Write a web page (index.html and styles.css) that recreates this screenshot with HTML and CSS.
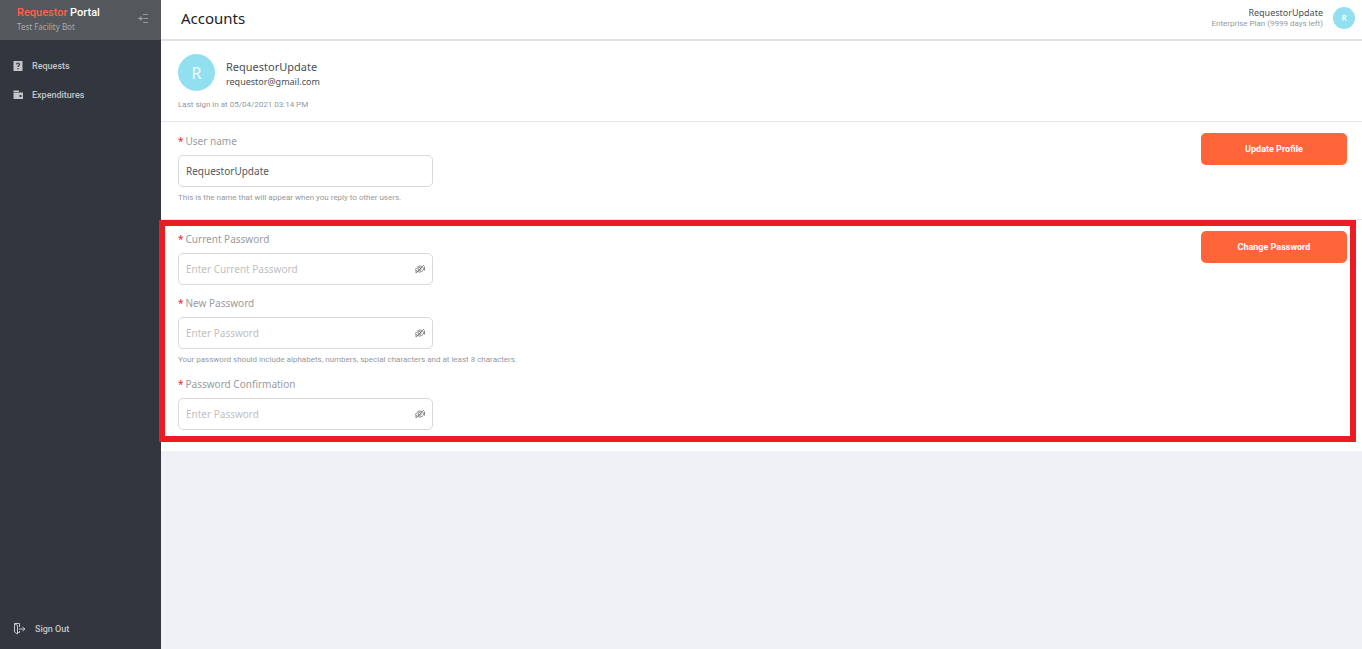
FILE: index.html
```html
<!DOCTYPE html>
<html lang="en">
  <head>
    <meta charset="UTF-8">
    <title>Accounts</title>
    <link rel="stylesheet" href="styles.css">
  </head>
<body>
  <svg class="sprite" aria-hidden="true">
    <symbol id="eye-off" viewBox="0 0 20 20">
      <path d="M1 11C4 6 7 4 10 4s6 2 8 6c-2 4-5 6-8 6s-6-1-9-5z" fill="none" stroke="currentColor" stroke-width="1.8"/>
      <circle cx="9" cy="10" r="3" fill="none" stroke="currentColor" stroke-width="1.8"/>
      <path d="M2 18L18 2M19 5v8M2 12v6" fill="none" stroke="currentColor" stroke-width="1.8"/>
    </symbol>
  </svg>

  <aside class="sidebar">
    <div class="brand">
      <div>
        <div class="brand-name"><span class="accent">Requestor</span> Portal</div>
        <div class="brand-sub">Test Facility Bot</div>
      </div>
      <button class="collapse" type="button" aria-label="Collapse menu">
        <svg width="11" height="11" viewBox="0 0 11 11" fill="none" stroke="currentColor">
          <path d="M5 1.5h5M6 5.5h4M5 9.5h5M0.5 5.5h5"/>
          <path d="M3.5 3L0 5.5L3.5 8z" fill="currentColor" stroke="none"/>
        </svg>
      </button>
    </div>
    <nav class="menu">
      <a class="menu-link" href="#">
        <svg width="10" height="10" viewBox="0 0 10 10">
          <rect x="0.5" width="9" height="10" fill="currentColor"/>
          <path d="M3.5 3.5C3.5 1.5 6.5 1.5 6.5 3.5C6.5 4.5 5 4.5 5 6M5 7v1.2" fill="none" stroke="#32363e" stroke-width="1.2"/>
        </svg>
        Requests
      </a>
      <a class="menu-link" href="#">
        <svg width="10" height="10" viewBox="0 0 10 10">
          <path d="M0.5 0.5H6V2H0.5zM0.5 2.5H10V9H0.5z" fill="currentColor"/>
          <rect x="6.5" y="5" width="2" height="2" fill="#32363e"/>
        </svg>
        Expenditures
      </a>
    </nav>
    <a class="sign-out" href="#">
      <svg width="13" height="12" viewBox="0 0 13 12" fill="none" stroke="currentColor">
        <path d="M1.5 0.5L4.5 2.5V11L1.5 9zM1.5 0.5H6.5V4M4.5 9.5H6.5V8M6 6H12M9.5 4L12 6L9.5 8"/>
      </svg>
      Sign Out
    </a>
  </aside>

  <main class="main">
    <header class="topbar">
      <h1 class="title">Accounts</h1>
      <div class="user">
        <div>
          <div class="user-name">RequestorUpdate</div>
          <div class="user-plan">Enterprise Plan (9999 days left)</div>
        </div>
        <div class="avatar avatar-small">R</div>
      </div>
    </header>

    <section class="profile">
      <div class="profile-row">
        <div class="avatar">R</div>
        <div class="profile-text">
          <div class="profile-name">RequestorUpdate</div>
          <div class="profile-mail">requestor@gmail.com</div>
        </div>
      </div>
      <div class="last-seen">Last sign in at 05/04/2021 03:14 PM</div>
    </section>

    <form class="panel">
      <div class="fields">
        <div class="field">
          <label class="label" for="username">User name</label>
          <div class="control">
            <input class="input" id="username" type="text" value="RequestorUpdate">
          </div>
          <p class="hint">This is the name that will appear when you reply to other users.</p>
        </div>
      </div>
      <button class="button" type="submit">Update Profile</button>
    </form>

    <form class="panel panel-password">
      <div class="fields">
        <div class="field">
          <label class="label" for="current">Current Password</label>
          <div class="control">
            <input class="input" id="current" type="password" placeholder="Enter Current Password">
            <button class="toggle" type="button" aria-label="Show password"><svg class="eye"><use href="#eye-off"/></svg></button>
          </div>
        </div>
        <div class="field">
          <label class="label" for="new">New Password</label>
          <div class="control">
            <input class="input" id="new" type="password" placeholder="Enter Password">
            <button class="toggle" type="button" aria-label="Show password"><svg class="eye"><use href="#eye-off"/></svg></button>
          </div>
          <p class="hint">Your password should include alphabets, numbers, special characters and at least 8 characters.</p>
        </div>
        <div class="field">
          <label class="label" for="confirm">Password Confirmation</label>
          <div class="control">
            <input class="input" id="confirm" type="password" placeholder="Enter Password">
            <button class="toggle" type="button" aria-label="Show password"><svg class="eye"><use href="#eye-off"/></svg></button>
          </div>
        </div>
      </div>
      <button class="button" type="submit">Change Password</button>
    </form>
  </main>
</body>
</html>
```

FILE: styles.css
```css
* {
  box-sizing: border-box;
}

body {
  margin: 0;
  min-height: 100vh;
  display: flex;
  background: #f0f1f5;
  color: #4b4f54;
  font-family: "Noto Sans", sans-serif;
  font-size: 10px;
}

button, input {
  font-family: inherit;
}

.sprite {
  display: none;
}

/* sidebar */
.sidebar {
  flex: 0 0 161px;
  display: flex;
  flex-direction: column;
  background: #32363e;
  color: #c3c5c8;
}

.brand {
  height: 40px;
  padding: 6px 12px 0 17px;
  display: flex;
  justify-content: space-between;
  background: #54575b;
}

.brand-name {
  color: #fff;
  font-family: Roboto, sans-serif;
  font-size: 11px;
  font-weight: 500;
  line-height: 14px;
}

.accent {
  color: #ff6347;
}

.brand-sub {
  color: #a9abad;
  font-size: 8px;
  line-height: 13px;
}

.collapse {
  height: 24px;
  padding: 0;
  display: flex;
  align-items: center;
  border: 0;
  background: none;
  color: #96989b;
}

.menu {
  flex: 1;
  padding-top: 11px;
}

.menu-link, .sign-out {
  display: flex;
  align-items: center;
  gap: 9px;
  height: 29px;
  padding-left: 13px;
  color: inherit;
  font-family: Roboto, sans-serif;
  font-size: 9px;
  font-weight: 500;
  text-decoration: none;
}

.sign-out {
  margin-bottom: 6px;
}

/* top bar */
.main {
  flex: 1;
  min-width: 0;
}

.topbar {
  height: 41px;
  padding: 0 7px 4px 20px;
  display: flex;
  align-items: center;
  justify-content: space-between;
  border-bottom: 2px solid #e2e2e4;
  background: #fff;
}

.title {
  margin: 0;
  color: #222;
  font-size: 15px;
  font-weight: 400;
}

.user {
  display: flex;
  align-items: center;
  gap: 10px;
  text-align: right;
}

.user-name {
  font-size: 9px;
  line-height: 12px;
}

.user-plan, .last-seen, .hint {
  color: #96999d;
  font-family: Roboto, sans-serif;
  font-size: 8px;
}

.user-plan {
  line-height: 10px;
}

.avatar {
  width: 37px;
  height: 37px;
  display: flex;
  align-items: center;
  justify-content: center;
  border-radius: 50%;
  background: #92e0ef;
  color: #eefbfe;
  font-size: 16px;
}

.avatar-small {
  width: 22px;
  height: 22px;
  font-size: 8px;
  font-weight: 600;
}

/* profile */
.profile {
  padding: 13px 17px 9px;
  border-bottom: 1px solid #e5e5e7;
  background: #fff;
}

.profile-row {
  display: flex;
  align-items: center;
  gap: 11px;
}

.profile-text {
  padding-top: 2px;
}

.profile-name {
  font-size: 11px;
  line-height: 16px;
}

.profile-mail {
  font-size: 9px;
  line-height: 14px;
}

.last-seen {
  margin-top: 7px;
  line-height: 14px;
}

/* forms */
.panel {
  position: relative;
  padding: 9px 15px 15px 17px;
  display: flex;
  align-items: flex-start;
  justify-content: space-between;
  border-bottom: 1px solid #e5e5e7;
  background: #fff;
}

.panel-password {
  padding-bottom: 21px;
  border-bottom: 0;
}

.panel-password::after {
  content: "";
  position: absolute;
  top: 0;
  right: 6px;
  bottom: 9px;
  left: -2px;
  border: 6px solid #ed1c24;
  pointer-events: none;
}

.fields {
  display: flex;
  flex-direction: column;
  gap: 8px;
}

.label {
  display: block;
  margin-bottom: 4px;
  color: #999ca0;
  line-height: 20px;
}

.label::before {
  content: "*";
  margin-right: 2px;
  color: #f5222d;
}

.control {
  display: flex;
  align-items: center;
  width: 255px;
  height: 32px;
  border: 1px solid #d9d9d9;
  border-radius: 5px;
}

.input {
  flex: 1;
  min-width: 0;
  padding: 0 7px;
  border: 0;
  outline: 0;
  background: none;
  color: #55585d;
  font-size: 10px;
}

.input::placeholder {
  color: #bfbfbf;
}

.toggle {
  padding: 0 7px 0 0;
  display: flex;
  border: 0;
  background: none;
  color: #77797c;
}

.eye {
  width: 10px;
  height: 10px;
}

.hint {
  margin: 4px 0 0;
  line-height: 13px;
}

.button {
  width: 146px;
  height: 32px;
  margin-top: 2px;
  border: 0;
  border-radius: 5px;
  background: #ff6539;
  color: #fff;
  font-family: Roboto, sans-serif;
  font-size: 9px;
  font-weight: 700;
}
```
